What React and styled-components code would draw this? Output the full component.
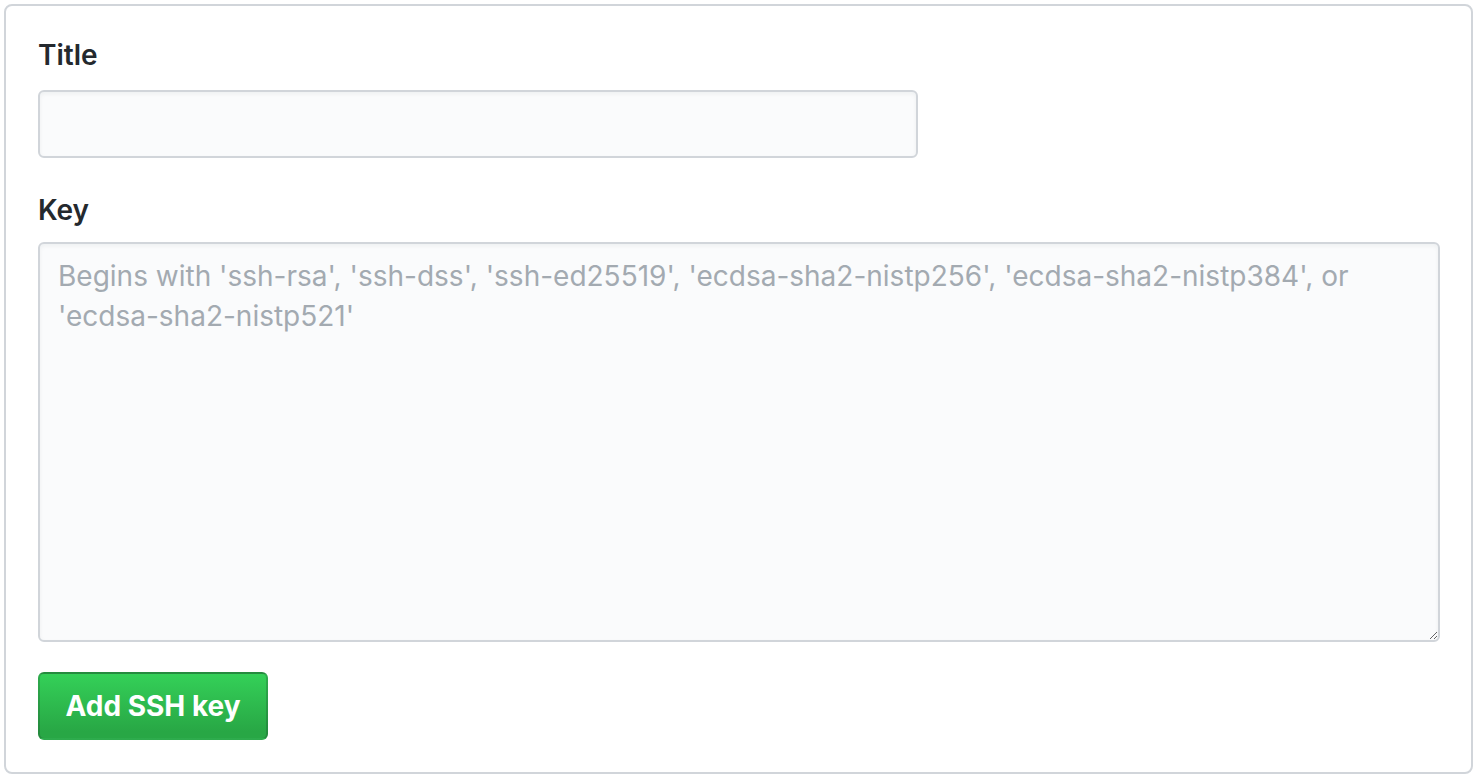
import React from 'react';
import styled, { createGlobalStyle } from 'styled-components';

const GlobalStyle = createGlobalStyle`
    html, body {
        margin: 0;
        padding: 0;
        background: #fff;
    }
    body {
        font-family: Inter, "Liberation Sans", Arial, sans-serif;
        color: #24292e;
    }
`;

const Page = styled.div`
    padding: 4px 5px 5px 4px;
`;

const Box = styled.form`
    border: 2px solid #d1d5da;
    border-radius: 8px;
    padding: 29px 32px 32px 32px;
    display: flex;
    flex-direction: column;
`;

const Field = styled.div`
    display: flex;
    flex-direction: column;
    margin-bottom: ${p => p.$last ? '30px' : '32px'};
`;

const Label = styled.label`
    font-size: 28px;
    line-height: 40px;
    font-weight: 600;
    color: #24292e;
    margin-bottom: ${p => p.$gap || '15px'};
`;

const Input = styled.input`
    box-sizing: border-box;
    width: 880px;
    height: 68px;
    padding: 12px 18px;
    font-size: 28px;
    font-family: inherit;
    background: #fafbfc;
    border: 2px solid #d1d5da;
    border-radius: 6px;
    box-shadow: inset 0 2px 4px rgba(27, 31, 35, 0.05);
    outline: none;
`;

const TextArea = styled.textarea`
    box-sizing: border-box;
    width: 1402px;
    height: 400px;
    padding: 12px 18px;
    font-size: 28px;
    line-height: 40px;
    font-family: inherit;
    color: #24292e;
    background: #fafbfc;
    border: 2px solid #d1d5da;
    border-radius: 6px;
    box-shadow: inset 0 2px 4px rgba(27, 31, 35, 0.05);
    outline: none;
    resize: vertical;

    &::placeholder {
        color: #a3aab1;
    }
`;

const Button = styled.button`
    align-self: flex-start;
    box-sizing: border-box;
    width: 230px;
    height: 68px;
    padding: 0 20px;
    font-family: inherit;
    font-size: 28px;
    font-weight: 700;
    color: #fff;
    background-image: linear-gradient(-180deg, #34d058 0%, #28a745 90%);
    border: 2px solid rgba(27, 31, 35, 0.2);
    border-radius: 6px;
    cursor: pointer;
`;

export default function App() {
    return (
        <Page>
            <GlobalStyle />
            <Box onSubmit={e => e.preventDefault()}>
                <Field>
                    <Label htmlFor="title">Title</Label>
                    <Input id="title" type="text" />
                </Field>
                <Field $last>
                    <Label htmlFor="key" $gap="12px">Key</Label>
                    <TextArea
                        id="key"
                        placeholder="Begins with 'ssh-rsa', 'ssh-dss', 'ssh-ed25519', 'ecdsa-sha2-nistp256', 'ecdsa-sha2-nistp384', or 'ecdsa-sha2-nistp521'"
                    />
                </Field>
                <Button type="submit">Add SSH key</Button>
            </Box>
        </Page>
    );
}
